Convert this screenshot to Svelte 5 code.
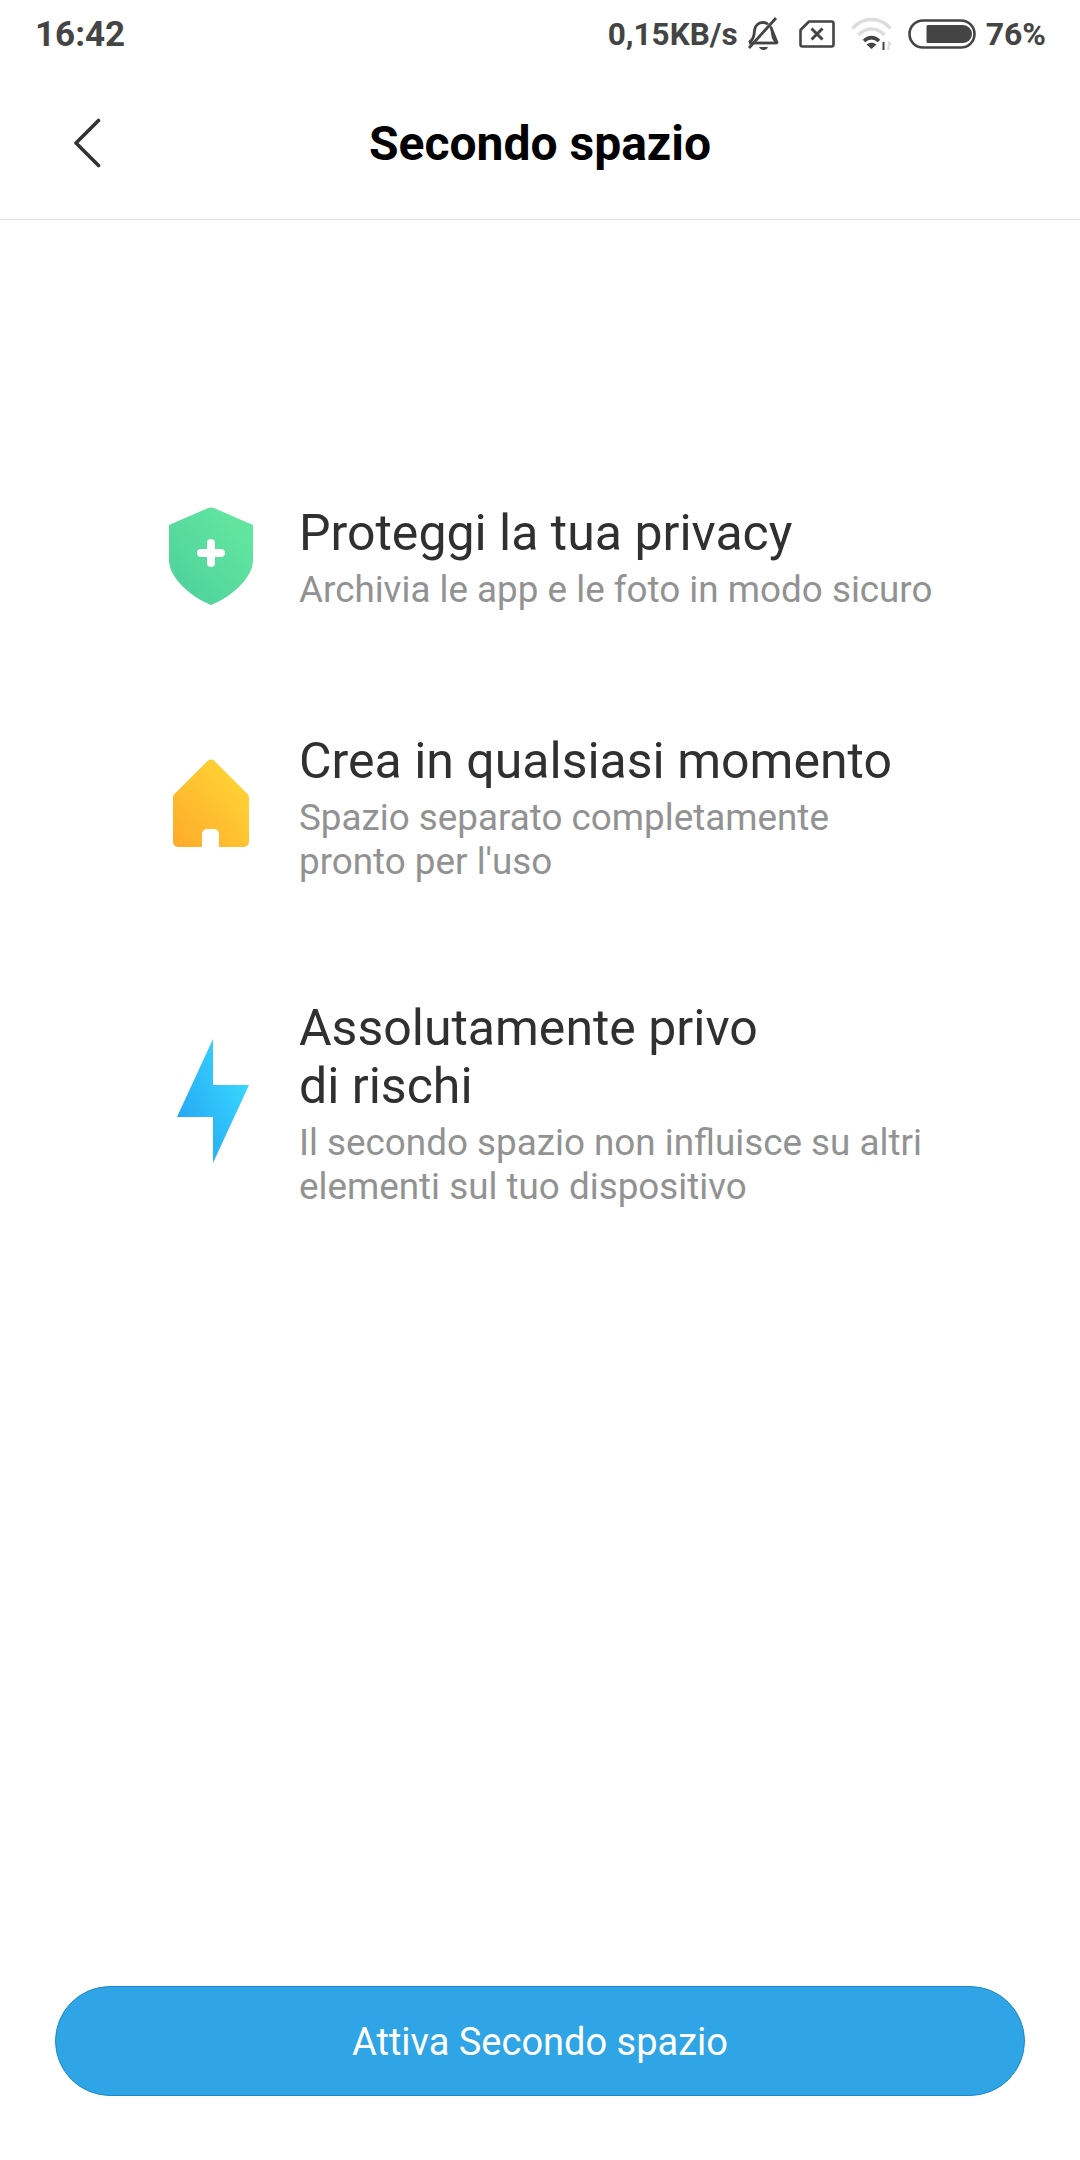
<script lang="ts">
	const features = [
		{ id: 'shield', title: ['Proteggi la tua privacy'], text: ['Archivia le app e le foto in modo sicuro'] },
		{ id: 'home', title: ['Crea in qualsiasi momento'], text: ['Spazio separato completamente', "pronto per l'uso"] },
		{ id: 'bolt', title: ['Assolutamente privo', 'di rischi'], text: ['Il secondo spazio non influisce su altri', 'elementi sul tuo dispositivo'] }
	];
</script>

<div class="page">
	<div class="status">
		<span class="clock">16:42</span>
		<div class="status-right">
			<span class="speed">0,15KB/s</span>
			<svg class="bell" width="31" height="34" viewBox="2 0 31 34" fill="none" stroke="#444" stroke-width="2.8">
				<path d="M3 25.5c3-2 4.500-4 5-8l.7-5c.7-4.500 4.300-7 8.300-7 2 0 3.700.6 5 1.700M25 10.500c.6 1.200 1 2.500 1.200 4l.6 4c.4 3 1.700 5.200 4.200 7z" stroke-linejoin="round" />
				<path d="M3 26h28" />
				<path d="M30 1 3 31" />
				<path d="M13 30h9c-.8 2-2.500 3-4.500 3s-3.700-1-4.500-3z" fill="#444" stroke="none" />
			</svg>
			<svg class="sim" width="36" height="28" viewBox="0 0 36 28" fill="none" stroke="#444" stroke-width="2.600">
				<path d="M10 1.500h22.500a2 2 0 0 1 2 2v21a2 2 0 0 1-2 2h-29a2 2 0 0 1-2-2V10z" stroke-linejoin="round" />
				<path d="m12.500 8.500 11 11m0-11-11 11" stroke-width="3" />
			</svg>
			<svg class="wifi" width="43" height="34" viewBox="0 0 42 34" fill="none">
				<path d="M2 11.500C12-.5 30-.5 40 11.500" stroke="#ddd" stroke-width="3.600" />
				<path d="M8 18c7.500-8 18.500-8 26 0" stroke="#ddd" stroke-width="3.600" />
				<path d="M13.500 24c4.500-4.500 10.500-4.500 15 0" stroke="#444" stroke-width="3.600" />
				<path d="m21 32-5-4.500c3-2.200 7-2.200 10 0z" fill="#444" />
				<path d="M33 25v8" stroke="#444" stroke-width="2" />
				<path d="M38 23l3.500 5H39v5h-2.500z" fill="#ddd" />
			</svg>
			<svg class="battery" width="68" height="30" viewBox="0 0 68 30" fill="none">
				<rect x="1.500" y="1.500" width="65" height="27" rx="13.500" stroke="#444" stroke-width="2.600" />
				<path d="M20 6h35a9 9 0 0 1 0 18H20a1.500 1.500 0 0 1-1.500-1.500v-15A1.500 1.500 0 0 1 20 6z" fill="#444" />
			</svg>
			<span>76%</span>
		</div>
	</div>

	<header class="bar">
		<svg class="back" width="30" height="50" viewBox="0 0 30 50" fill="none" stroke="#333" stroke-width="3.600" stroke-linecap="round" stroke-linejoin="round">
			<path d="M26.500 2.500 4 25l22.500 22.500" />
		</svg>
		<h1>Secondo spazio</h1>
	</header>

	<main class="features">
		{#each features as f}
			<section class="feature">
				<div class="icon {f.id}">
					{#if f.id === 'shield'}
						<svg width="86" height="98" viewBox="0 0 86 98">
							<defs>
								<linearGradient id="g-shield" x1="1" y1="0" x2="0" y2="1">
									<stop offset="0" stop-color="#66ea9f" />
									<stop offset="1" stop-color="#4ccf9c" />
								</linearGradient>
							</defs>
							<path d="M39.500 1.200c2.300-1 4.700-1 7 0L85 18v35c0 18-22 37-42 45C23 90 1 71 1 53V18z" fill="url(#g-shield)" />
							<path d="M43 36v20M33 46h20" stroke="#fff" stroke-width="8" stroke-linecap="round" />
						</svg>
					{:else if f.id === 'home'}
						<svg width="78" height="90" viewBox="0 0 78 90">
							<defs>
								<linearGradient id="g-home" x1="1" y1="0" x2="0" y2="1">
									<stop offset="0" stop-color="#ffdb36" />
									<stop offset="1" stop-color="#ffaa2b" />
								</linearGradient>
							</defs>
							<path d="M35.500 2c2-2 5-2 7 0l33 33c1.200 1.200 1.500 2 1.500 3.500V83a5 5 0 0 1-5 5H47V75a5 5 0 0 0-5-5h-7a5 5 0 0 0-5 5v13H6a5 5 0 0 1-5-5V38.500c0-1.500.3-2.300 1.500-3.500z" fill="url(#g-home)" />
						</svg>
					{:else}
						<svg width="72" height="124" viewBox="0 0 72 124">
							<defs>
								<linearGradient id="g-bolt" x1="1" y1="0.2" x2="0.1" y2="0.9">
									<stop offset="0" stop-color="#3cdcff" />
									<stop offset="1" stop-color="#22a4f3" />
								</linearGradient>
							</defs>
							<path d="M36 0v46h36l-36 78V78H0z" fill="url(#g-bolt)" />
						</svg>
					{/if}
				</div>
				<div class="copy">
					<h2>{#each f.title as line}<span>{line}</span>{/each}</h2>
					<p>{#each f.text as line}<span>{line}</span>{/each}</p>
				</div>
			</section>
		{/each}
	</main>

	<div class="footer">
		<button>Attiva Secondo spazio</button>
	</div>
</div>

<style>
	:global(body) {
		margin: 0;
		background: #fff;
	}

	.page {
		width: 1080px;
		height: 2160px;
		display: flex;
		flex-direction: column;
		font-family: Roboto, 'Liberation Sans', sans-serif;
		background: #fff;
		overflow: hidden;
	}

	.status {
		height: 68px;
		flex-shrink: 0;
		display: flex;
		align-items: center;
		justify-content: space-between;
		padding: 0 36px 0 35px;
		color: #444;
		font-size: 32px;
		font-weight: 700;
	}

	.clock {
		font-size: 35px;
	}

	.speed {
		font-size: 31.5px;
	}

	.status-right {
		display: flex;
		align-items: center;
		gap: 10px;
		margin-right: -2px;
	}

	.sim {
		margin-left: 10px;
	}

	.wifi {
		margin-left: 5px;
	}

	.battery {
		margin-left: 5px;
	}

	.bar {
		height: 151px;
		flex-shrink: 0;
		position: relative;
		display: flex;
		align-items: center;
		justify-content: center;
		border-bottom: 1px solid #ddd;
	}

	.back {
		position: absolute;
		left: 72px;
		top: 50px;
	}

	h1 {
		margin: 0;
		font-size: 48px;
		font-weight: 700;
		color: #000;
	}

	.features {
		flex: 1;
		padding: 278px 0 0 148px;
		display: flex;
		flex-direction: column;
	}

	.feature {
		display: flex;
		align-items: center;
		min-height: 120px;
		margin-bottom: 114px;
	}

	.feature:nth-child(2) {
		margin-bottom: 115px;
	}

	.icon {
		width: 126px;
		margin-right: 25px;
		display: flex;
		justify-content: center;
		padding-bottom: 8px;
	}

	.icon.shield {
		padding-bottom: 4px;
	}

	.icon.bolt {
		padding-bottom: 6px;
		transform: translateX(2px);
	}

	.copy {
		display: flex;
		flex-direction: column;
	}

	h2 {
		margin: 0;
		font-size: 50px;
		line-height: 58px;
		font-weight: 400;
		color: #303030;
	}

	p {
		margin: 6px 0 0;
		font-size: 36.8px;
		line-height: 44px;
		color: #929292;
	}

	h2 span,
	p span {
		display: block;
		white-space: nowrap;
	}

	.footer {
		padding: 0 55px 64px;
	}

	button {
		width: 100%;
		height: 110px;
		border: 1px solid #1b86cc;
		border-radius: 55px;
		background: #2fa5e6;
		color: #fff;
		font-family: inherit;
		font-size: 38px;
		padding: 2px 0 0;
		display: block;
	}
</style>
